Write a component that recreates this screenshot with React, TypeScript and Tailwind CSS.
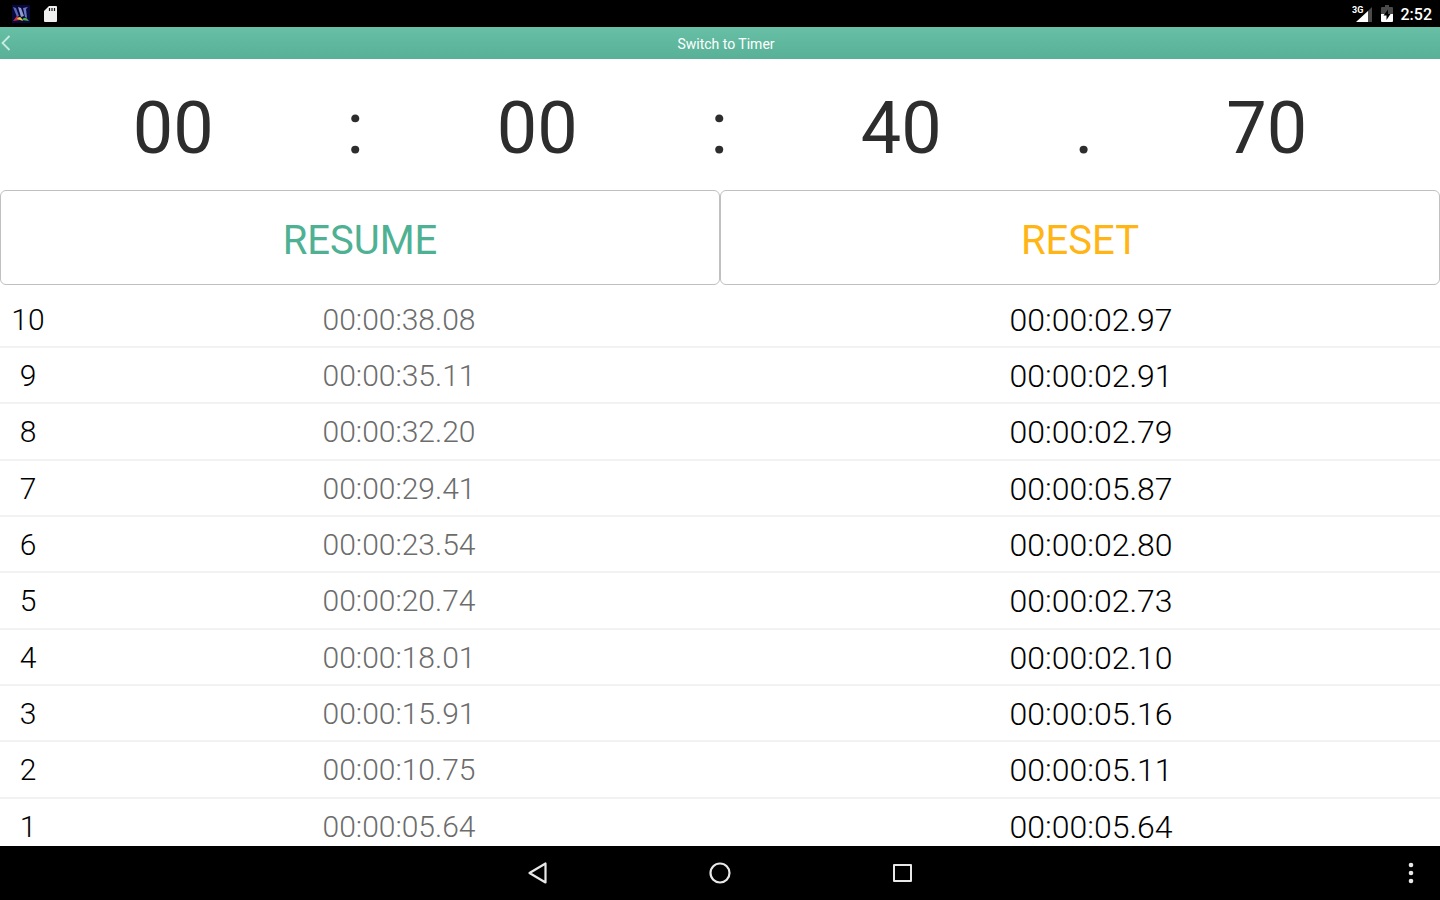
const laps = [
  ["10", "00:00:38.08", "00:00:02.97"],
  ["9", "00:00:35.11", "00:00:02.91"],
  ["8", "00:00:32.20", "00:00:02.79"],
  ["7", "00:00:29.41", "00:00:05.87"],
  ["6", "00:00:23.54", "00:00:02.80"],
  ["5", "00:00:20.74", "00:00:02.73"],
  ["4", "00:00:18.01", "00:00:02.10"],
  ["3", "00:00:15.91", "00:00:05.16"],
  ["2", "00:00:10.75", "00:00:05.11"],
  ["1", "00:00:05.64", "00:00:05.64"],
];

function StatusBar() {
  return (
    <div className="flex h-[27px] shrink-0 items-center justify-between bg-black pl-3 pr-2 text-white">
      <div className="flex items-center gap-3.5">
        <svg width="18" height="18" viewBox="0 0 18 18" aria-hidden="true">
          <rect width="18" height="18" fill="#08083c" />
          <path d="M1 2l3 1 3 8-2 1z" fill="#5a68b8" />
          <path d="M6 2l3 1 3 8-3 1z" fill="#8f9ad0" />
          <path d="M11 3l5-1-2 2 1 9-2-1z" fill="#6a78c0" />
          <path d="M1 16l4-5 3 4z" fill="#c83040" />
          <path d="M5 14q3-5 6 2z" fill="#e0c83a" />
          <path d="M10 15q3-5 7 1z" fill="#4fae4a" />
        </svg>
        <svg width="13" height="16" viewBox="0 0 13 16" aria-hidden="true">
          <path d="M5 0h7a1 1 0 0 1 1 1v14a1 1 0 0 1-1 1H1a1 1 0 0 1-1-1V5z" fill="#f0f0f0" />
          <path d="M5.500 2v3M8 2v3M10.500 2v3" stroke="#111" strokeWidth="1.200" />
        </svg>
      </div>
      <div className="flex items-center">
        <svg width="21" height="18" viewBox="0 0 21 18" aria-hidden="true">
          <path d="M20 2v15H5z" fill="#4a4a4a" />
          <path d="M16 6v11H4z" fill="#fff" />
          <text x="0" y="8" fill="#fff" fontSize="9" fontWeight="700" fontFamily="Roboto, sans-serif">3G</text>
        </svg>
        <svg className="mx-2" width="12" height="17" viewBox="0 0 12 17" aria-hidden="true">
          <path d="M4 0h4v2h3a1 1 0 0 1 1 1v6H0V3a1 1 0 0 1 1-1h3z" fill="#4a4a4a" />
          <path d="M0 9h12v7a1 1 0 0 1-1 1H1a1 1 0 0 1-1-1z" fill="#fff" />
          <path d="M7 4.500L2.500 10.500h3V15l4-6H7z" fill="#000" />
        </svg>
        <span className="pt-0.5 text-base leading-none font-medium">2:52</span>
      </div>
    </div>
  );
}

function NavBar() {
  return (
    <nav className="grid h-[54px] shrink-0 grid-cols-[1fr_auto_1fr] items-center bg-black text-white">
      <span />
      <div className="flex gap-[158px]">
        <button aria-label="Back" className="block">
          <svg width="24" height="24" viewBox="0 0 24 24" fill="none" stroke="#e8e8e8" strokeWidth="2.200" strokeLinejoin="round">
            <path d="M19.500 2.500v19L3.500 12z" />
          </svg>
        </button>
        <button aria-label="Home" className="block">
          <svg width="24" height="24" viewBox="0 0 24 24" fill="none" stroke="#e8e8e8" strokeWidth="2.200">
            <circle cx="12" cy="12" r="9.500" />
          </svg>
        </button>
        <button aria-label="Recent apps" className="block">
          <svg width="24" height="24" viewBox="0 0 24 24" fill="none" stroke="#e8e8e8" strokeWidth="2" strokeLinejoin="round">
            <rect x="4" y="4" width="17" height="16" />
          </svg>
        </button>
      </div>
      <button aria-label="More options" className="mr-[17px] justify-self-end">
        <svg width="24" height="24" viewBox="0 0 24 24" fill="#e8e8e8">
          <circle cx="12" cy="4" r="2.300" />
          <circle cx="12" cy="12" r="2.300" />
          <circle cx="12" cy="20" r="2.300" />
        </svg>
      </button>
    </nav>
  );
}

export default function App() {
  return (
    <div className="flex h-screen flex-col overflow-hidden bg-white font-['Roboto',sans-serif] text-black">
      <StatusBar />
      <header className="grid h-8 shrink-0 grid-cols-[12px_1fr] items-center bg-linear-to-b from-[#67c0a5] to-[#58b096] text-white">
        <button aria-label="Back">
          <svg width="12" height="18" viewBox="0 0 12 18" fill="none" stroke="#c8ecdf" strokeWidth="1.800">
            <path d="M9.500 2L2.500 9l7 7" />
          </svg>
        </button>
        <button className="justify-self-center pt-0.5 text-sm leading-5">Switch to Timer</button>
      </header>
      <main className="min-h-0 flex-1 overflow-hidden">
        <div role="timer" className="flex h-[131px] items-center pt-2 text-center text-[72px] leading-none text-[#2d2d2d]">
          <span className="flex-1">00</span>
          <span>:</span>
          <span className="flex-1">00</span>
          <span>:</span>
          <span className="flex-1">40</span>
          <span>.</span>
          <span className="flex-1">70</span>
        </div>
        <div className="grid grid-cols-2 text-[40px]">
          <button className="h-[95px] rounded-md border border-[#c0c0c0] pt-1.5 text-[#4fb193]">RESUME</button>
          <button className="h-[95px] rounded-md border border-[#c0c0c0] pt-1.5 text-[#ffb515]">RESET</button>
        </div>
        <table className="mt-[7px] h-[563px] w-full table-fixed border-collapse text-center font-light">
          <colgroup>
            <col className="w-14" />
            <col />
            <col />
          </colgroup>
          <tbody>
            {laps.map(([lap, total, split]) => (
              <tr key={lap} className="border-b-2 border-[#f2f2f2]">
                <th scope="row" className="p-0 pt-0.5 text-[30px] leading-9 font-light">{lap}</th>
                <td className="p-0 pt-0.5 pr-1.5 text-[30px] leading-9 text-[#6c6c6c]">{total}</td>
                <td className="p-0 pt-0.5 pr-1.5 text-[32px] leading-9">{split}</td>
              </tr>
            ))}
          </tbody>
        </table>
      </main>
      <NavBar />
    </div>
  );
}
